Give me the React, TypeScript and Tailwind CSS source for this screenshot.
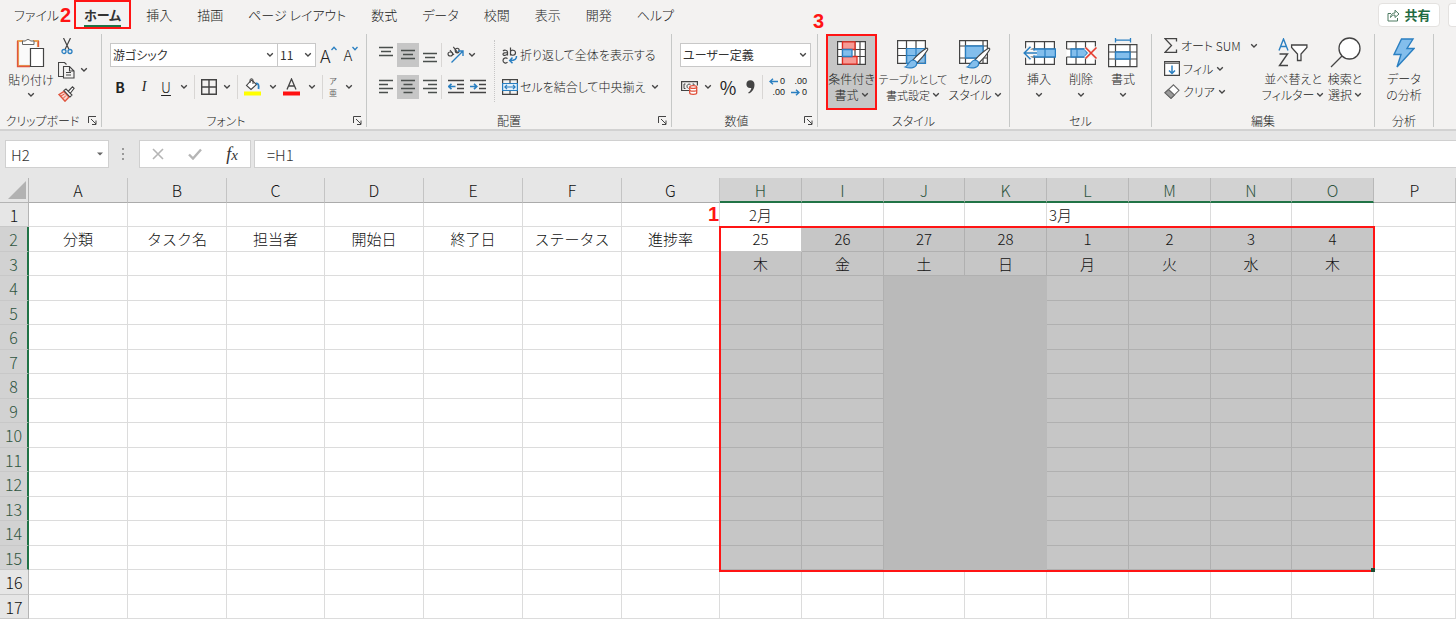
import React from "react";
import clsx from "clsx";

const INK = "#444444";
const BLUE = "#2a7fc1";
const SKY = "#83beec";

const columns = [
	{ name: "A", width: "w-[99px]", head: "分類" },
	{ name: "B", width: "w-[99px]", head: "タスク名" },
	{ name: "C", width: "w-[98px]", head: "担当者" },
	{ name: "D", width: "w-[99px]", head: "開始日" },
	{ name: "E", width: "w-[99px]", head: "終了日" },
	{ name: "F", width: "w-[99px]", head: "ステータス" },
	{ name: "G", width: "w-[98px]", head: "進捗率" },
	{ name: "H", width: "w-[82px]", month: "2月", head: "25", day: "木" },
	{ name: "I", width: "w-[82px]", head: "26", day: "金" },
	{ name: "J", width: "w-[81px]", head: "27", day: "土" },
	{ name: "K", width: "w-[82px]", head: "28", day: "日" },
	{ name: "L", width: "w-[82px]", month: "3月", head: "1", day: "月" },
	{ name: "M", width: "w-[82px]", head: "2", day: "火" },
	{ name: "N", width: "w-[81px]", head: "3", day: "水" },
	{ name: "O", width: "w-[82px]", head: "4", day: "木" },
	{ name: "P", width: "" },
];

const rows = Array.from({ length: 17 }, (_, i) => i + 1);

/* ---------- small parts ---------- */

function Chevron({ className }: { className?: string }) {
	return (
		<svg width="8" height="6" viewBox="0 0 8 6" className={clsx("inline-block shrink-0", className)}>
			<path d="M1.2 1.2 4 4l2.8-2.8" fill="none" stroke={INK} strokeWidth="1.3" />
		</svg>
	);
}

function Divider() {
	return <span className="h-6 w-px shrink-0 bg-[#d8d6d4]" />;
}

function Group({
	label,
	className,
	launcher,
	children,
}: {
	label: string;
	className: string;
	launcher?: boolean;
	children: React.ReactNode;
}) {
	return (
		<section className={clsx("relative flex h-[93px] shrink-0 flex-col border-r border-[#c6c8c7]", className)}>
			<div className="flex h-[81px] shrink-0 px-2">{children}</div>
			<h2 className="text-center text-[12px] leading-3">{label}</h2>
			{launcher && (
				<button aria-label={label + "の詳細"} className="absolute right-1 bottom-[2px]">
					<svg width="9" height="9" viewBox="0 0 9 9" fill="none" stroke={INK} className="block">
						<path d="M.5 7V.5H8M3 3l5 5M8 4.500V8.500H4" />
					</svg>
				</button>
			)}
		</section>
	);
}

function BigButton({
	icon,
	lines,
	chevron,
	className,
}: {
	icon: React.ReactNode;
	lines: string[];
	chevron?: boolean;
	className?: string;
}) {
	return (
		<button className={clsx("flex h-[76px] shrink-0 flex-col items-center leading-4 whitespace-nowrap", className)}>
			<span className="flex h-[37px] shrink-0 items-center">{icon}</span>
			<span>{lines[0]}</span>
			<span className="flex h-4 items-center gap-[2px]">
				{lines[1]}
				{chevron && <Chevron />}
			</span>
		</button>
	);
}

function IconButton({
	label,
	active,
	className,
	children,
}: {
	label: string;
	active?: boolean;
	className?: string;
	children: React.ReactNode;
}) {
	return (
		<button
			aria-label={label}
			className={clsx("flex h-6 shrink-0 items-center justify-center", active && "bg-[#c6c6c6]", className)}
		>
			{children}
		</button>
	);
}

function Combo({ label, value, className }: { label: string; value: string; className: string }) {
	return (
		<span className={clsx("relative flex h-6 shrink-0", className)}>
			<select
				aria-label={label}
				className="w-full appearance-none border border-[#c8c8c8] bg-white pl-[2px] text-[12px] leading-5 font-normal text-[#333]"
			>
				<option>{value}</option>
			</select>
			<Chevron className="pointer-events-none absolute top-[9px] right-1" />
		</span>
	);
}

/* ---------- icons ---------- */

function PasteIcon() {
	return (
		<svg width="30" height="32" viewBox="0 0 30 32" fill="none">
			<path d="M7 4H2v25h12M17 4h5v6" stroke="#e9a154" strokeWidth="2" />
			<path d="M4 6h16v5h-7v16H4z" fill="#fafafa" />
			<path d="M1.500 4v25.500H14M22.500 4v6" stroke="#e0563f" strokeWidth="1.300" />
			<path d="M6.500 7.500V4H9.500a2.800 2.800 0 0 1 5 0H18v3.500z" fill="#fff" stroke="#666" />
			<path d="M14.500 11.500h13v18h-13z" fill="#fff" stroke={INK} strokeWidth="1.200" />
		</svg>
	);
}

function CutIcon() {
	return (
		<svg width="12" height="17" viewBox="0 0 12 17" fill="none">
			<path d="M2.500 0 8 11.500M9.500 0 4 11.500" stroke={INK} strokeWidth="1.200" />
			<circle cx="3" cy="13.500" r="2" stroke={BLUE} strokeWidth="1.300" />
			<circle cx="9" cy="13.500" r="2" stroke={BLUE} strokeWidth="1.300" />
		</svg>
	);
}

function CopyIcon() {
	return (
		<svg width="18" height="17" viewBox="0 0 18 17" fill="none" stroke={INK} strokeWidth="1.100">
			<path d="M5.500 14.500h-5V.5h6l2 2" />
			<path d="M5.500 4.500h6l4.500 4.500v7H5.500zM11.500 4.500V9H16M8 10.500h5M8 13h5" />
		</svg>
	);
}

function PainterIcon() {
	return (
		<svg width="17" height="16" viewBox="0 0 17 16" fill="none">
			<path d="M1 8.500 6 5.500l5 5.500-4 4.200z" fill="#fbd5cd" stroke="#e0563f" strokeWidth="1.400" />
			<path d="M3 10l3.500-2M5 12.500l3-3" stroke="#e0563f" />
			<path d="M6 4.500 8 3l6 6-2 2zM10.500 5 14.500.8l1.600 1.500L12.500 7" fill="#fff" stroke={INK} strokeWidth="1.100" />
		</svg>
	);
}

function BorderIcon() {
	return (
		<svg width="16" height="16" viewBox="0 0 16 16" fill="none" stroke={INK} strokeWidth="1.400">
			<path d="M.7.7h14.600v14.600H.7zM8 .7v14.600M.7 8h14.600" />
		</svg>
	);
}

function FillIcon() {
	return (
		<svg width="17" height="18" viewBox="0 0 17 18" fill="none">
			<path d="M7.500 2 2.500 7.500l4.500 4 5.500-5z" fill="#fff" stroke={INK} strokeWidth="1.100" />
			<path d="M6 5V2.200a1.500 1.500 0 0 1 3 0V6" stroke={INK} />
			<path d="M12 5.500c2.500-.5 3 2 2.500 5.500" stroke={BLUE} strokeWidth="1.800" />
			<path d="M0 13.500h17v4H0z" fill="#ffff00" />
		</svg>
	);
}

function FontColorIcon() {
	return (
		<svg width="17" height="18" viewBox="0 0 17 18" fill="none">
			<path d="M4 11.500 8.500 1 13 11.500M5.600 8h5.800" stroke={INK} strokeWidth="1.300" />
			<path d="M0 13.500h17v4H0z" fill="#ff1111" />
		</svg>
	);
}

function LinesIcon({ d, height = 16 }: { d: string; height?: number }) {
	return (
		<svg width="16" height={height} viewBox={`0 0 16 ${height}`} fill="none" stroke="#4a4f4d" strokeWidth="1.300">
			<path d={d} />
		</svg>
	);
}

function IndentIcon({ inward }: { inward?: boolean }) {
	return (
		<svg width="16" height="16" viewBox="0 0 16 16" fill="none" strokeWidth="1.300">
			<path d="M0 1.500h16M9 5.500h7M9 9.500h7M0 13.500h16" stroke={INK} />
			<path d={inward ? "M0 7.500h6.500M4 4.800 6.800 7.500 4 10.200" : "M1 7.500h6.500M3.500 4.800.7 7.500l2.800 2.700"} stroke={BLUE} strokeWidth="1.600" />
		</svg>
	);
}

function OrientationIcon() {
	return (
		<svg width="18" height="18" viewBox="0 0 18 18" fill="none">
			<g stroke={INK} strokeWidth="1.100">
				<ellipse cx="4.300" cy="8" rx="2.300" ry="2" />
				<path d="m4 4.200 4 4.800M7.300.8l4.400 5.800" />
				<ellipse cx="11.200" cy="4.600" rx="2" ry="2.300" />
			</g>
			<path d="M5.500 16.500 16.500 5.500M12 5h5v5" stroke={BLUE} strokeWidth="1.400" />
		</svg>
	);
}

function WrapIcon() {
	return (
		<svg width="16" height="17" viewBox="0 0 16 17" fill="none">
			<g stroke={INK} strokeWidth="1.200">
				<path d="M1 4c1-1.200 4.500-1.200 4.500 1v3.500M5.500 5.500C3 5.500 1 6 1 7.200c0 1.800 3.500 1.500 4.500-.4M8.500.5v8M8.500 5c0-2.500 5-2.500 5 .8s-5 3-5 .7" />
				<path d="M5.500 11.700c-1.500-1.500-4.500-.7-4.500 1.800s3 3.300 4.500 1.700" />
			</g>
			<path d="M14.500 9c.3 3-1.500 4.500-6.500 4.500M10.500 10.500 7.700 13.500l2.800 2.800" stroke={BLUE} strokeWidth="1.500" />
		</svg>
	);
}

function MergeIcon() {
	return (
		<svg width="16" height="16" viewBox="0 0 16 16" fill="none">
			<path d="M.6.600h14.800v14.800H.6zM8 .6v3.900M8 11.500v3.900" stroke={INK} strokeWidth="1.200" />
			<path d="M.6 4.500h14.800v7H.6z" fill="#e4f1fb" stroke={BLUE} strokeWidth="1.200" />
			<path d="M3 8h10M5 5.900 2.900 8 5 10.100M11 5.900 13.100 8 11 10.100" stroke={BLUE} strokeWidth="1.200" />
		</svg>
	);
}

function CurrencyIcon() {
	return (
		<svg width="17" height="15" viewBox="0 0 17 15" fill="none">
			<path d="M8 10.500H.6V1.600h15.800v4" stroke={INK} strokeWidth="1.200" />
			<path d="M4.500 4H3v4.500h1.500M9.500 4.300C7 3.500 6 5 6 6.200s.5 2 1.500 2.200M13 5V4h-1.500" stroke={INK} />
			<path d="M8.700 7v6c0 1.700 7 1.700 7 0V7" fill="#fff" stroke="#e0503a" strokeWidth="1.300" />
			<ellipse cx="12.200" cy="7" rx="3.500" ry="1.400" fill="#fff" stroke="#e0503a" strokeWidth="1.200" />
			<path d="M8.700 10c0 1.600 7 1.600 7 0" stroke="#e0503a" strokeWidth="1.200" />
		</svg>
	);
}

function DecimalIcon({ less }: { less?: boolean }) {
	return (
		<span className="relative flex w-4 flex-col items-end font-['Liberation_Sans',sans-serif] text-[9px] leading-[11px]">
			<span>{less ? ".00" : "0"}</span>
			<span>{less ? "0" : ".00"}</span>
			<svg width="9" height="7" viewBox="0 0 9 7" fill="none" stroke={BLUE} strokeWidth="1.400" className={clsx("absolute left-0", less ? "bottom-[2px]" : "top-[2px]")}>
				<path d={less ? "M0 3.500h8M5 .8 8 3.500 5 6.200" : "M9 3.500H1M4 .8 1 3.500l3 2.700"} />
			</svg>
		</span>
	);
}

function ConditionalIcon() {
	return (
		<svg width="29" height="24" viewBox="0 0 29 24">
			<path d="M.6.600h27.800v22.800H.6z" fill="#fff" />
			<path d="M5.500.6v22.800M18 .6v22.800M23 .6v22.800M.6 8.500h27.800M.6 15.500h27.800M.6.600h27.800v22.800H.6z" fill="none" stroke={INK} strokeWidth="1.200" />
			<path d="M5.500.8H18v7.700H5.500zM5.500 15.500H20v7.700H5.500z" fill="#f79a94" stroke="#e02b20" strokeWidth="1.300" />
			<path d="M5.500 8.500h9.500v7H5.500z" fill={SKY} stroke={BLUE} strokeWidth="1.300" />
		</svg>
	);
}

function Brush() {
	return (
		<g>
			<path d="M29 8.500c1.200-1 2.300 0 1.500 1.400C27.500 15 24 19 20 23l-4-3.200C20 15.500 24 11.500 29 8.500z" fill="#fff" stroke={INK} strokeWidth="1.100" />
			<path d="M15.500 20c2.500 0 4.500 1.800 4.200 4-.5 3.500-6 5-11.500 3 3-1 3.500-6.500 7.300-7z" fill={SKY} stroke={BLUE} strokeWidth="1.200" />
		</g>
	);
}

function TableStyleIcon() {
	return (
		<svg width="32" height="29" viewBox="0 0 32 29" className="mt-1">
			<path d="M.6.600h27.800v22.800H.6z" fill="#fff" />
			<path d="M9.500 8.500h19v15h-19z" fill={SKY} />
			<path d="M.6.600h27.800v22.800H.6zM9.500.6v22.800M19 .6v8M.6 8.500h9M.6 15.500h9M9.500 8.500h19" fill="none" stroke={INK} strokeWidth="1.200" />
			<path d="M9.500 8.500h19v15h-19zM19 8.500v15M9.500 15.500h19" fill="none" stroke={BLUE} strokeWidth="1.200" />
			<Brush />
		</svg>
	);
}

function CellStyleIcon() {
	return (
		<svg width="32" height="29" viewBox="0 0 32 29" className="mt-1">
			<path d="M.6.600h27.800v22.800H.6z" fill="#fff" />
			<path d="M.6.600h27.800v22.800H.6zM6.500.6v22.800M24 .6v22.800M.6 6h27.800M.6 18h27.800" fill="none" stroke={INK} strokeWidth="1.200" />
			<path d="M6.500 6H24v12H6.500z" fill={SKY} stroke={BLUE} strokeWidth="1.300" />
			<Brush />
		</svg>
	);
}

function InsertIcon() {
	return (
		<svg width="33" height="24" viewBox="0 0 33 24" fill="none">
			<path d="M2.600.600h28.800v22.800H2.600z" fill="#fff" />
			<path d="M2.600 8V.6h28.800v22.800H2.600V16M11.500.6v22.800M21.500.6v22.800M2.600 8h28.800M2.600 16h28.800" stroke={INK} strokeWidth="1.200" />
			<path d="M11 8h21.400v8H11z" fill={SKY} stroke={BLUE} strokeWidth="1.300" />
			<path d="M22 8v8" stroke={BLUE} strokeWidth="1.200" />
			<path d="M14 12H1.500M7.500 5.500 1 12l6.500 6.500" stroke="#f3f2f1" strokeWidth="4.500" />
			<path d="M14 12H1.500M7.500 5.800 1.200 12l6.300 6.200" stroke={BLUE} strokeWidth="1.500" />
		</svg>
	);
}

function DeleteIcon() {
	return (
		<svg width="33" height="24" viewBox="0 0 33 24" fill="none">
			<path d="M1.600.600h28.800v22.800H1.600z" fill="#fff" />
			<path d="M1.600 8V.6h28.800V8M1.600 16v7.400h28.800V16M11 .6v7.900M20.500.6v7.900M11 15.500v7.900M20.500 15.500v7.900M1.600 8H24M1.600 16H24" stroke={INK} strokeWidth="1.200" />
			<path d="M6 8h13.500l3 4-3 4H6z" fill={SKY} stroke={BLUE} strokeWidth="1.300" />
			<path d="M12 8v8" stroke={BLUE} />
			<path d="m20.500 6.500 11 11M31.500 6.500l-11 11" stroke="#f3f2f1" strokeWidth="4" />
			<path d="m20.500 6.500 11 11M31.500 6.500l-11 11" stroke="#e63b2e" strokeWidth="1.600" />
		</svg>
	);
}

function FormatIcon() {
	return (
		<svg width="30" height="30" viewBox="0 0 30 30" fill="none">
			<path d="M7.500 0v4.500M22.500 0v4.500M7.500 2.200h15" stroke={BLUE} strokeWidth="1.300" />
			<path d="M.6 6.600h28.300v22H.6z" fill="#fff" stroke={INK} strokeWidth="1.200" />
			<path d="M7.500 6.600v22M22 6.600v22M.6 14h28.300M.6 21h28.300" stroke={INK} strokeWidth="1.200" />
			<path d="M7.500 14H22v7H7.500z" fill={SKY} stroke={BLUE} strokeWidth="1.300" />
		</svg>
	);
}

function SumIcon() {
	return (
		<svg width="14" height="15" viewBox="0 0 14 15" fill="none" stroke={INK} strokeWidth="1.300">
			<path d="M12.500 3.500V.7H1l6.500 6.800L1 14.300h11.500v-2.800" />
		</svg>
	);
}

function FillDownIcon() {
	return (
		<svg width="16" height="15" viewBox="0 0 16 15" fill="none">
			<path d="M.6.600h14.800v13.800H.6z" fill="#fff" stroke={INK} strokeWidth="1.200" />
			<path d="M.6 1.500h14.800v1.500H.6z" fill="#777" />
			<path d="M8 4.500v8M5 9.500l3 3 3-3" stroke={BLUE} strokeWidth="1.500" />
		</svg>
	);
}

function EraserIcon() {
	return (
		<svg width="16" height="15" viewBox="0 0 16 15" fill="none" stroke="#666" strokeWidth="1.100">
			<path d="m9.500.8 5.500 5.500-8 8L1 8.800z" fill="#fff" />
			<path d="M4.500 5.500 10.500 11 7 14.300 1 8.800z" fill="#9a9a9a" />
		</svg>
	);
}

function SortIcon() {
	return (
		<svg width="30" height="30" viewBox="0 0 30 30" fill="none">
			<path d="M1 12.500 5.500 1 10 12.500M2.500 8.500h6" stroke={BLUE} strokeWidth="1.400" />
			<path d="M1.500 16H9.500L1.500 27.500h8.500" stroke={INK} strokeWidth="1.400" />
			<path d="M13.600 7h15.300v2.500L23 16v6.500h-3.500V16l-5.900-6.500z" fill="#fff" stroke={INK} strokeWidth="1.300" />
		</svg>
	);
}

function SearchIcon() {
	return (
		<svg width="31" height="31" viewBox="0 0 31 31" fill="none" stroke={INK} strokeWidth="1.300">
			<circle cx="19.500" cy="11.500" r="10.500" fill="#fff" />
			<path d="M12 19 1 30" />
		</svg>
	);
}

function BoltIcon() {
	return (
		<svg width="22" height="30" viewBox="0 0 22 30">
			<path d="M8.500 1h11.500l-6 9.500h7L4 29l4-12.500H1z" fill={SKY} stroke={BLUE} strokeWidth="1.400" />
		</svg>
	);
}

/* ---------- ribbon ---------- */

function TabBar() {
	return (
		<header className="relative flex h-[30px] items-center justify-between pl-[14px] text-[13px] leading-5">
			<nav className="flex items-center gap-[25px] whitespace-nowrap">
				<a href="#file">ファイル</a>
				<a href="#home" className="relative font-bold text-[#333]">
					ホーム
					<span className="absolute inset-x-0 -bottom-[2px] h-[2px] bg-[#217346]" />
					<span className="absolute -inset-x-[10px] -top-[5px] -bottom-1 border-2 border-[#ff1414]" />
				</a>
				<a href="#insert">挿入</a>
				<a href="#draw">描画</a>
				<a href="#layout">ページ レイアウト</a>
				<a href="#formula">数式</a>
				<a href="#data">データ</a>
				<a href="#review">校閲</a>
				<a href="#view">表示</a>
				<a href="#dev">開発</a>
				<a href="#help">ヘルプ</a>
			</nav>
			<div className="flex gap-2">
				<button className="flex h-6 w-[62px] items-center justify-center gap-1 rounded-sm border border-[#e4e2e0] bg-white font-bold text-[#1f6b41]">
					<svg width="13" height="13" viewBox="0 0 13 13" fill="none" stroke="#4d7a61">
						<path d="M4 4.500H1v7.500h9.500V9M3.500 8.500c.3-3 2-4.500 4.500-4.500V1.200L12 5 8 8.500V6C6 6 4.500 6.800 3.500 8.500z" />
					</svg>
					共有
				</button>
				<button aria-label="コメント" className="h-6 w-2 rounded-l-sm border border-r-0 border-[#e4e2e0] bg-white" />
			</div>
			<Mark className="top-[3px] left-[60px]">2</Mark>
		</header>
	);
}

function Mark({ className, children }: { className: string; children: React.ReactNode }) {
	return (
		<span className={clsx("absolute z-10 font-['Liberation_Sans',sans-serif] text-[20px] leading-6 font-bold text-[#ff1414]", className)}>
			{children}
		</span>
	);
}

function Ribbon() {
	return (
		<div className="relative flex h-[101px] border-b-2 border-[#d2d2d2] pt-1 text-[12px]">
			<Group label="クリップボード" className="w-[102px] [&>h2]:pr-4" launcher>
				<button className="flex w-[46px] flex-col items-center leading-4 whitespace-nowrap">
					<span className="flex h-[38px] items-center">
						<PasteIcon />
					</span>
					貼り付け
					<Chevron className="mt-1" />
				</button>
				<div className="ml-1 flex flex-col">
					<IconButton label="切り取り" className="w-[17px]">
						<CutIcon />
					</IconButton>
					<IconButton label="コピー" className="gap-1">
						<CopyIcon />
						<Chevron />
					</IconButton>
					<IconButton label="書式のコピー" className="w-[17px]">
						<PainterIcon />
					</IconButton>
				</div>
			</Group>

			<Group label="フォント" className="w-[265px] [&>h2]:pr-4" launcher>
				<div className="flex flex-col gap-2 pt-[9px]">
					<div className="flex items-center">
						<Combo label="フォント名" value="游ゴシック" className="w-[168px]" />
						<Combo label="サイズ" value="11" className="-ml-px w-[39px]" />
						<button aria-label="拡大" className="ml-1 flex text-[18px] leading-5">
							A
							<svg width="6" height="5" viewBox="0 0 6 5" fill="none" stroke={BLUE} strokeWidth="1.300" className="mt-px">
								<path d="M.5 4 3 1.200 5.500 4" />
							</svg>
						</button>
						<button aria-label="縮小" className="ml-[7px] flex text-[15px] leading-5">
							A
							<svg width="6" height="5" viewBox="0 0 6 5" fill="none" stroke={BLUE} strokeWidth="1.300" className="mt-px">
								<path d="M.5 1 3 3.800 5.500 1" />
							</svg>
						</button>
					</div>
					<div className="flex h-6 items-center gap-[6px] text-[14px] leading-6">
						<button className="w-5 font-bold">B</button>
						<button className="w-4 font-['Liberation_Serif',serif] italic">I</button>
						<button className="w-4 underline underline-offset-2">U</button>
						<Chevron />
						<Divider />
						<BorderIcon />
						<Chevron />
						<Divider />
						<IconButton label="塗りつぶしの色" className="gap-2">
							<FillIcon />
							<Chevron />
						</IconButton>
						<IconButton label="フォントの色" className="gap-2">
							<FontColorIcon />
							<Chevron />
						</IconButton>
						<Divider />
						<button className="flex items-center gap-2 text-[8px] leading-3 font-normal text-[#666]">
							<span>
								ア<br />亜
							</span>
							<Chevron />
						</button>
					</div>
				</div>
			</Group>

			<Group label="配置" className="w-[305px] [&>h2]:pr-5" launcher>
				<div className="flex flex-col gap-2 pt-[9px]">
					<div className="flex items-center">
						<IconButton label="上揃え" className="w-[22px]">
							<LinesIcon d="M1 1.500h14M3 5.500h10M1 9.500h14" height={18} />
						</IconButton>
						<IconButton label="上下中央揃え" className="w-[22px]" active>
							<LinesIcon d="M1 3.500h14M3 7.500h10M1 11.500h14" />
						</IconButton>
						<IconButton label="下揃え" className="w-[22px]">
							<LinesIcon d="M1 7.500h14M3 11.500h10M1 15.500h14" height={18} />
						</IconButton>
						<Divider />
						<IconButton label="方向" className="ml-1 gap-1">
							<OrientationIcon />
							<Chevron />
						</IconButton>
					</div>
					<div className="flex items-center">
						<IconButton label="左揃え" className="w-[22px]">
							<LinesIcon d="M1 1.500h14M1 5.500h9M1 9.500h14M1 13.500h9" />
						</IconButton>
						<IconButton label="中央揃え" className="w-[22px]" active>
							<LinesIcon d="M1 1.500h14M3.500 5.500h9M1 9.500h14M3.500 13.500h9" />
						</IconButton>
						<IconButton label="右揃え" className="w-[22px]">
							<LinesIcon d="M1 1.500h14M6 5.500h9M1 9.500h14M6 13.500h9" />
						</IconButton>
						<Divider />
						<IconButton label="インデントを減らす" className="w-[28px]">
							<IndentIcon />
						</IconButton>
						<IconButton label="インデントを増やす" className="w-4">
							<IndentIcon inward />
						</IconButton>
					</div>
				</div>
				<div className="mt-[6px] ml-2 flex h-[62px] flex-col gap-2 border-l border-dotted border-[#c6c6c6] pt-[3px] pl-[7px] whitespace-nowrap">
					<button className="flex h-6 items-center gap-[2px]">
						<WrapIcon />
						折り返して全体を表示する
					</button>
					<button className="flex h-6 items-center gap-[2px]">
						<MergeIcon />
						セルを結合して中央揃え
						<Chevron className="ml-1" />
					</button>
				</div>
			</Group>

			<Group label="数値" className="w-[146px] [&>h2]:pr-4" launcher>
				<div className="flex flex-col gap-2 pt-[9px]">
					<Combo label="表示形式" value="ユーザー定義" className="w-[131px]" />
					<div className="flex items-center gap-[6px]">
						<IconButton label="通貨" className="gap-[6px] pl-px">
							<CurrencyIcon />
							<Chevron />
						</IconButton>
						<button className="w-5 text-center text-[18px] leading-6 font-normal">%</button>
						<IconButton label="桁区切り" className="w-3">
							<svg width="9" height="14" viewBox="0 0 9 14">
								<path d="M4.300.3C7 .3 8.500 2 8.500 4.800c0 4-2.500 7.500-5.700 8.700l-.6-1c1.800-1.200 3-2.800 3.100-4.600C2.500 8.600.4 7 .4 4.300.4 1.900 2 .3 4.300.3z" fill={INK} />
							</svg>
						</IconButton>
						<Divider />
						<IconButton label="小数点以下の表示桁数を増やす">
							<DecimalIcon />
						</IconButton>
						<IconButton label="小数点以下の表示桁数を減らす">
							<DecimalIcon less />
						</IconButton>
					</div>
				</div>
			</Group>

			<Group label="スタイル" className="w-[192px]">
				<BigButton
					icon={<ConditionalIcon />}
					lines={["条件付き", "書式"]}
					chevron
					className="w-[51px] bg-[#c6c6c6] outline-2 -outline-offset-2 outline-[#ff1414]"
				/>
				<BigButton icon={<TableStyleIcon />} lines={["テーブルとして", "書式設定"]} chevron className="ml-px w-[70px] text-[11px]" />
				<BigButton icon={<CellStyleIcon />} lines={["セルの", "スタイル"]} chevron className="w-[54px]" />
			</Group>

			<Group label="セル" className="w-[142px]">
				<BigButton icon={<InsertIcon />} lines={["挿入", ""]} chevron className="w-[42px]" />
				<BigButton icon={<DeleteIcon />} lines={["削除", ""]} chevron className="w-[42px]" />
				<BigButton icon={<FormatIcon />} lines={["書式", ""]} chevron className="w-[42px]" />
			</Group>

			<Group label="編集" className="w-[223px]">
				<div className="ml-1 flex w-[94px] flex-col whitespace-nowrap">
					<button className="flex h-[23px] items-center gap-[3px]">
						<SumIcon />
						オート SUM
						<Chevron className="ml-auto" />
					</button>
					<button className="flex h-[23px] items-center gap-[3px]">
						<FillDownIcon />
						フィル
						<Chevron />
					</button>
					<button className="flex h-[23px] items-center gap-[3px]">
						<EraserIcon />
						クリア
						<Chevron />
					</button>
				</div>
				<BigButton icon={<SortIcon />} lines={["並べ替えと", "フィルター"]} chevron className="ml-1 w-[62px]" />
				<BigButton icon={<SearchIcon />} lines={["検索と", "選択"]} chevron className="w-[42px]" />
			</Group>

			<Group label="分析" className="w-[59px]">
				<BigButton icon={<BoltIcon />} lines={["データ", "の分析"]} className="w-[42px]" />
			</Group>

			<Mark className="-top-[21px] left-[813px]">3</Mark>
		</div>
	);
}

function FormulaBar() {
	return (
		<div className="flex h-[47px] items-start bg-[#e6e6e6] pt-[9px] text-[15px] text-[#333]">
			<div className="relative ml-[5px] w-[104px] shrink-0">
				<input aria-label="名前ボックス" defaultValue="H2" className="h-7 w-full border border-[#d0d0d0] bg-white px-[5px]" />
				<svg width="6" height="4" viewBox="0 0 6 4" className="absolute top-3 right-[6px]">
					<path d="M0 .5h6L3 3.500z" fill="#666" />
				</svg>
			</div>
			<svg width="30" height="28" viewBox="0 0 30 28" fill="#999" className="shrink-0">
				<path d="M13 8h2v2h-2zM13 13h2v2h-2zM13 18h2v2h-2z" />
			</svg>
			<div className="flex h-7 w-[112px] shrink-0 items-center justify-between border border-[#d0d0d0] bg-white px-3">
				<button aria-label="キャンセル">
					<svg width="12" height="12" viewBox="0 0 12 12" fill="none" stroke="#b5b5b5" strokeWidth="1.600">
						<path d="m1 1 10 10M11 1 1 11" />
					</svg>
				</button>
				<button aria-label="入力">
					<svg width="14" height="12" viewBox="0 0 14 12" fill="none" stroke="#b5b5b5" strokeWidth="2.400">
						<path d="m1 6.500 4 4L13 1.500" />
					</svg>
				</button>
				<button className="font-['Liberation_Serif',serif] text-[18px] leading-5 italic">
					f<span className="text-[15px]">x</span>
				</button>
			</div>
			<input
				aria-label="数式バー"
				defaultValue="=H1"
				className="ml-[3px] h-7 min-w-0 flex-1 border border-r-0 border-[#d0d0d0] bg-white px-3"
			/>
		</div>
	);
}

/* ---------- sheet ---------- */

const isPicked = (col: number) => col >= 7 && col <= 14;
const isWeekend = (col: number) => col === 9 || col === 10;

function cellClass(row: number, col: number) {
	if (row < 2 || row > 15 || !isPicked(col)) return "border-[#dcdcdc] bg-white";
	if (row === 2 && col === 7) return "border-[#c6c6c6] bg-white";
	if (row > 3 && isWeekend(col)) return "border-[#bababa] bg-[#bababa]";
	return "border-[#b0b0b0] bg-[#c6c6c6]";
}

function cellText(row: number, col: number) {
	const c = columns[col];
	if (row === 1) return c.month;
	if (row === 2) return c.head;
	if (row === 3) return c.day;
	return null;
}

function Sheet() {
	return (
		<main className="relative">
			<table className="w-full table-fixed border-separate border-spacing-0 text-center text-[15px] leading-5 text-[#111]">
				<thead>
					<tr className="h-[25px] bg-[#e6e6e6] text-[16px]">
						<th className="w-[29px] border-r border-b border-[#b4b4b4] p-0">
							<svg width="20" height="20" viewBox="0 0 20 20" className="ml-[7px]">
								<path d="M19 1v18H1z" fill="#b2b2b2" />
							</svg>
						</th>
						{columns.map((c, i) => (
							<th
								key={c.name}
								className={clsx(
									"border-r p-0 font-light",
									c.width,
									isPicked(i)
										? "border-b-2 border-r-[#b8b8b8] border-b-[#217346] bg-[#d2d2d2] text-[#2f5540]"
										: "border-b border-r-[#c4c4c4] border-b-[#ababab]",
								)}
							>
								{c.name}
							</th>
						))}
					</tr>
				</thead>
				<tbody>
					{rows.map((row) => (
						<tr key={row} className="odd:h-[24px] even:h-[25px]">
							<th
								className={clsx(
									"border-b border-b-[#c8c8c8] p-0 text-[16px] font-light",
									row >= 2 && row <= 15
										? "border-r-2 border-r-[#217346] bg-[#d2d2d2] text-[#2f5540]"
										: "border-r border-r-[#b4b4b4] bg-[#e6e6e6]",
								)}
							>
								{row}
							</th>
							{columns.map((c, i) => (
								<td
									key={c.name}
									className={clsx("border-r border-b p-0", cellClass(row, i), c.name === "L" && row === 1 && "pl-[2px] text-left")}
								>
									{cellText(row, i)}
								</td>
							))}
						</tr>
					))}
				</tbody>
			</table>

			{/* selected range */}
			<div className="pointer-events-none absolute top-12 left-[719px] h-[346px] w-[656px] border-2 border-[#ff1414]">
				<span className="absolute -right-[2px] -bottom-[2px] h-1 w-1 bg-[#1d4d33]" />
			</div>
			<Mark className="top-6 left-[708px]">1</Mark>
		</main>
	);
}

export default function App() {
	return (
		<div className="overflow-hidden bg-[#f3f2f1] font-['Noto_Sans_CJK_JP',sans-serif] font-light text-[#222]">
			<div className="[font-feature-settings:'palt']">
				<TabBar />
				<Ribbon />
			</div>
			<FormulaBar />
			<Sheet />
		</div>
	);
}
